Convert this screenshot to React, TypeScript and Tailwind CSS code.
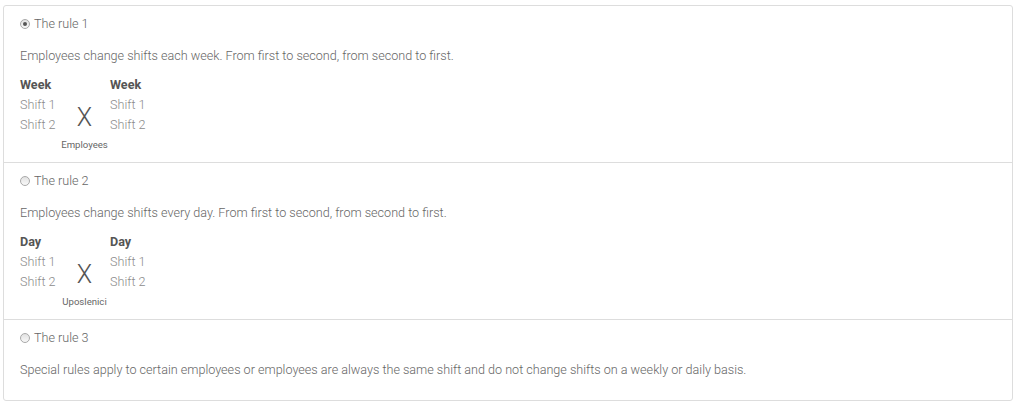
const rules = [
  {
    id: 1,
    label: "The rule 1",
    checked: true,
    text: "Employees change shifts each week. From first to second, from second to first.",
    period: "Week",
    caption: "Employees",
  },
  {
    id: 2,
    label: "The rule 2",
    checked: false,
    text: "Employees change shifts every day. From first to second, from second to first.",
    period: "Day",
    caption: "Uposlenici",
  },
  {
    id: 3,
    label: "The rule 3",
    checked: false,
    text: "Special rules apply to certain employees or employees are always the same shift and do not change shifts on a weekly or daily basis.",
    period: null,
    caption: null,
  },
];

function Radio({ checked }: { checked: boolean }) {
  return (
    <span className="inline-flex w-[10px] h-[10px] rounded-full border border-[#a9a9a9] bg-gradient-to-b from-[#e2e2e2] to-[#f8f8f8] items-center justify-center shrink-0">
      {checked && <span className="w-[4px] h-[4px] rounded-full bg-[#555]" />}
    </span>
  );
}

function ShiftTable({ period, caption }: { period: string; caption: string }) {
  return (
    <div className="mt-[9px] grid grid-cols-[39px_51px_auto] leading-[20px]">
      <div className="font-bold text-[#555]">{period}</div>
      <div />
      <div className="font-bold text-[#555]">{period}</div>
      <div className="text-[#8c8c8c]">Shift 1</div>
      <div className="row-span-2 flex items-center justify-center text-[25px] font-light text-[#555] leading-none pt-[4px]">
        X
      </div>
      <div className="text-[#8c8c8c]">Shift 1</div>
      <div className="text-[#8c8c8c]">Shift 2</div>
      <div className="text-[#8c8c8c]">Shift 2</div>
      <div />
      <div className="text-center text-[9.6px] text-[#666] font-normal">{caption}</div>
      <div />
    </div>
  );
}

export default function App() {
  return (
    <div className="bg-white w-[1018px] h-[404px] pt-[5px] pl-[3px] font-['Roboto',sans-serif] text-[12.6px] font-light text-[#666]">
      <div className="w-[1010px] border border-[#dddddd] rounded-[3px]">
        {rules.map((rule, i) => (
          <div
            key={rule.id}
            className={`px-4 pt-[8px] ${i < rules.length - 1 ? "border-b border-[#dddddd] pb-[7px]" : "pb-[20px]"}`}
          >
            <label className="flex items-center gap-[4px] h-[20px]">
              <Radio checked={rule.checked} />
              <span>{rule.label}</span>
            </label>
            <p className="mt-[12px] leading-[20px]">{rule.text}</p>
            {rule.period && rule.caption && (
              <ShiftTable period={rule.period} caption={rule.caption} />
            )}
          </div>
        ))}
      </div>
    </div>
  );
}
